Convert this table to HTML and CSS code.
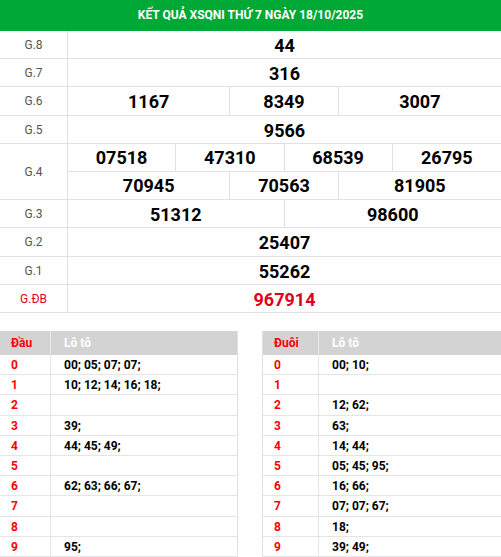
FILE: index.html
```html
<!DOCTYPE html>
<html lang="vi">
<head>
<meta charset="utf-8">
<link rel="stylesheet" href="styles.css">
</head>
<body>
<div class="page">
  <div class="title">KẾT QUẢ XSQNI THỨ 7 NGÀY 18/10/2025</div>
  <div class="results">
    <div class="row h28"><div class="lbl">G.8</div><div class="vals"><div class="v s8">44</div></div></div>
    <div class="row h28"><div class="lbl">G.7</div><div class="vals"><div class="v s8">316</div></div></div>
    <div class="row h29"><div class="lbl">G.6</div><div class="vals"><div class="v s3 bd">1167</div><div class="v s2 bd">8349</div><div class="v s3">3007</div></div></div>
    <div class="row h28"><div class="lbl">G.5</div><div class="vals"><div class="v s8">9566</div></div></div>
    <div class="row h56"><div class="lbl">G.4</div>
      <div class="vals two">
        <div class="v s2 bd bb">07518</div><div class="v s2 bd bb">47310</div><div class="v s2 bd bb">68539</div><div class="v s2 bb">26795</div>
        <div class="v s3 bd">70945</div><div class="v s2 bd">70563</div><div class="v s3">81905</div>
      </div>
    </div>
    <div class="row h28"><div class="lbl">G.3</div><div class="vals"><div class="v s4 bd">51312</div><div class="v s4">98600</div></div></div>
    <div class="row h29"><div class="lbl">G.2</div><div class="vals"><div class="v s8">25407</div></div></div>
    <div class="row h28"><div class="lbl">G.1</div><div class="vals"><div class="v s8">55262</div></div></div>
    <div class="row h28"><div class="lbl red">G.ĐB</div><div class="vals"><div class="v s8 red">967914</div></div></div>
  </div>

  <div class="loto">
    <div class="lt left">
      <div class="lr head"><div class="k">Đầu</div><div class="t">Lô tô</div></div>
      <div class="lr"><div class="k">0</div><div class="t">00; 05; 07; 07;</div></div>
      <div class="lr"><div class="k">1</div><div class="t">10; 12; 14; 16; 18;</div></div>
      <div class="lr tall"><div class="k">2</div><div class="t"></div></div>
      <div class="lr"><div class="k">3</div><div class="t">39;</div></div>
      <div class="lr"><div class="k">4</div><div class="t">44; 45; 49;</div></div>
      <div class="lr"><div class="k">5</div><div class="t"></div></div>
      <div class="lr"><div class="k">6</div><div class="t">62; 63; 66; 67;</div></div>
      <div class="lr tall"><div class="k">7</div><div class="t"></div></div>
      <div class="lr"><div class="k">8</div><div class="t"></div></div>
      <div class="lr"><div class="k">9</div><div class="t">95;</div></div>
    </div>
    <div class="lt right">
      <div class="lr head"><div class="k">Đuôi</div><div class="t">Lô tô</div></div>
      <div class="lr"><div class="k">0</div><div class="t">00; 10;</div></div>
      <div class="lr"><div class="k">1</div><div class="t"></div></div>
      <div class="lr tall"><div class="k">2</div><div class="t">12; 62;</div></div>
      <div class="lr"><div class="k">3</div><div class="t">63;</div></div>
      <div class="lr"><div class="k">4</div><div class="t">14; 44;</div></div>
      <div class="lr"><div class="k">5</div><div class="t">05; 45; 95;</div></div>
      <div class="lr"><div class="k">6</div><div class="t">16; 66;</div></div>
      <div class="lr tall"><div class="k">7</div><div class="t">07; 07; 67;</div></div>
      <div class="lr"><div class="k">8</div><div class="t">18;</div></div>
      <div class="lr"><div class="k">9</div><div class="t">39; 49;</div></div>
    </div>
  </div>
</div>
</body>
</html>
```
FILE: styles.css
```css
* { box-sizing: border-box; }
html, body { margin: 0; padding: 0; background: #fff; }
body { font-family: Roboto, "Noto Sans", Arial, sans-serif; color: #000; }
.page { width: 501px; }

.title {
  height: 31px;
  background: #00a835;
  color: #fff;
  font-weight: bold;
  font-size: 12px;
  display: flex;
  align-items: center;
  justify-content: center;
  padding-bottom: 2px;
}

.results { display: flex; flex-direction: column; }
.row {
  display: grid;
  grid-template-columns: 68px 1fr;
  border-bottom: 1px solid #e0e0e0;
}
.h28 { height: 28px; }
.h29 { height: 29px; }
.h56 { height: 56px; }

.lbl {
  border-right: 1px solid #e0e0e0;
  display: flex;
  align-items: center;
  justify-content: center;
  font-size: 12px;
  color: #555;
}
.vals {
  display: grid;
  grid-template-columns: repeat(8, 1fr);
}
.vals.two { grid-template-rows: 1fr 1fr; }
.v {
  display: flex;
  align-items: center;
  justify-content: center;
  font-size: 18px;
  font-weight: bold;
  color: #000;
  padding-top: 1px;
}
.s2 { grid-column: span 2; }
.s3 { grid-column: span 3; }
.s4 { grid-column: span 4; }
.s8 { grid-column: span 8; }
.bd { border-right: 1px solid #e0e0e0; }
.bb { border-bottom: 1px solid #e0e0e0; }
.red, .v.red { color: #e0001b; }

.loto {
  margin-top: 18px;
  display: flex;
  justify-content: space-between;
}
.lt { display: flex; flex-direction: column; }
.lt.left { width: 238px; border-right: 1px solid #e0e0e0; }
.lt.right { width: 239px; border-left: 1px solid #e0e0e0; }
.lr {
  display: grid;
  height: 20px;
  border-bottom: 1px solid #e5e5e5;
  font-size: 12px;
  font-weight: bold;
}
.lr.tall { height: 21px; }
.left .lr { grid-template-columns: 51px 1fr; }
.right .lr { grid-template-columns: 56px 1fr; }
.lr .k {
  color: #ff0000;
  padding-left: 11px;
  border-right: 1px solid #e5e5e5;
  display: flex;
  align-items: center;
}
.lr .t {
  padding-left: 13px;
  display: flex;
  align-items: center;
}
.lr.head {
  height: 24px;
  background: #d3d3d3;
  border-bottom: none;
}
.lr.head .k { border-right: 1px solid #e8e8e8; }
.lr.head .t { color: #fff; }
```
